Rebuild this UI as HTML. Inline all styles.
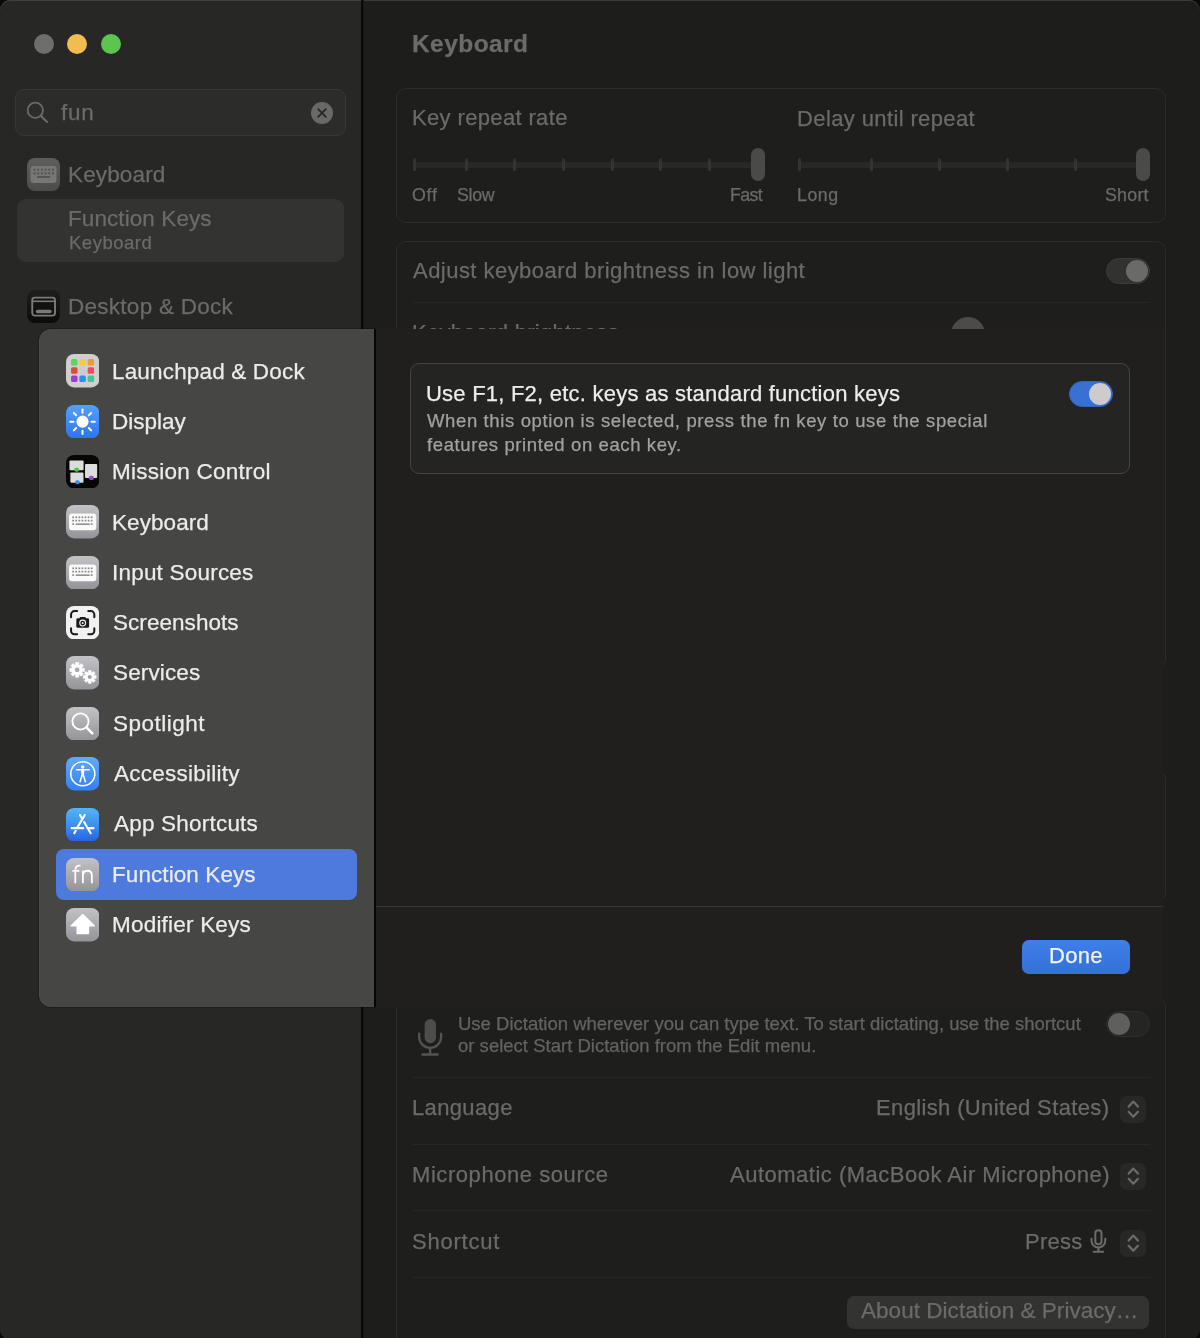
<!DOCTYPE html>
<html><head><meta charset="utf-8">
<style>
*{margin:0;padding:0;box-sizing:border-box}
html,body{width:1200px;height:1338px;overflow:hidden;background:#0a0a0a;font-family:"Liberation Sans",sans-serif}
.a{position:absolute}
.t{position:absolute;white-space:nowrap;line-height:1;-webkit-text-stroke:0.25px currentColor;will-change:transform}
svg{display:block}
</style></head><body>

<div class="a" style="left:0px;top:0px;width:1200px;height:1340px;background:#1d1d1b;border-radius:11px;box-shadow:inset 0 1px 0 #3c3c3b"></div>
<div class="a" style="left:0px;top:0px;width:362px;height:1340px;background:#272725;border-radius:11px 0 0 11px;box-shadow:inset 0 1px 0 #40403e"></div>
<div class="a" style="left:361px;top:0px;width:1.8px;height:1338px;background:#080808"></div>
<div class="a" style="left:362.8px;top:0px;width:1.2px;height:1338px;background:#1a1716"></div>
<div class="a" style="left:33.5px;top:33.5px;width:20px;height:20px;border-radius:50%;background:#6e6e6d"></div>
<div class="a" style="left:67px;top:33.5px;width:20px;height:20px;border-radius:50%;background:#f2bd50"></div>
<div class="a" style="left:100.7px;top:33.5px;width:20px;height:20px;border-radius:50%;background:#5dc452"></div>
<div class="a" style="left:15px;top:89px;width:331px;height:47px;border-radius:9px;background:#2c2c2b;border:1px solid #373736"></div>
<svg class="a" style="left:25px;top:100px" width="26" height="26" viewBox="0 0 26 26"><circle cx="10.3" cy="10.3" r="7.6" fill="none" stroke="#6b6b6a" stroke-width="1.8"/><line x1="15.8" y1="15.8" x2="22" y2="22" stroke="#6b6b6a" stroke-width="2" stroke-linecap="round"/></svg>
<div id="t0" class="t" style="left:61.11px;top:101.75px;font-size:22.5px;color:#6b6b6a;font-weight:normal;letter-spacing:0.750px;">fun</div>
<svg class="a" style="left:311px;top:101.5px" width="22" height="22" viewBox="0 0 22 22"><circle cx="11" cy="11" r="11" fill="#696968"/><path d="M7.2 7.2L14.8 14.8M14.8 7.2L7.2 14.8" stroke="#262625" stroke-width="1.8" stroke-linecap="round"/></svg>
<svg class="a" style="left:27px;top:158px" width="33" height="33" viewBox="0 0 33 33"><defs><linearGradient id="gk0" x1="0" y1="0" x2="0" y2="1"><stop offset="0" stop-color="#5e5e5d"/><stop offset="1" stop-color="#4c4c4b"/></linearGradient></defs><rect width="33" height="33" rx="8" fill="url(#gk0)"/><rect x="3.5" y="8" width="26" height="17" rx="3" fill="#777776"/><rect x="6.5" y="10.7" width="2" height="2" fill="#555554"/><rect x="10.2" y="10.7" width="2" height="2" fill="#555554"/><rect x="13.9" y="10.7" width="2" height="2" fill="#555554"/><rect x="17.6" y="10.7" width="2" height="2" fill="#555554"/><rect x="21.3" y="10.7" width="2" height="2" fill="#555554"/><rect x="25.0" y="10.7" width="2" height="2" fill="#555554"/><rect x="6.5" y="14.3" width="2" height="2" fill="#555554"/><rect x="10.2" y="14.3" width="2" height="2" fill="#555554"/><rect x="13.9" y="14.3" width="2" height="2" fill="#555554"/><rect x="17.6" y="14.3" width="2" height="2" fill="#555554"/><rect x="21.3" y="14.3" width="2" height="2" fill="#555554"/><rect x="25.0" y="14.3" width="2" height="2" fill="#555554"/><rect x="10" y="18" width="13" height="2" fill="#555554"/></svg>
<div id="t1" class="t" style="left:68.11px;top:163.75px;font-size:22.5px;color:#6b6b6a;font-weight:normal;letter-spacing:0.143px;">Keyboard</div>
<div class="a" style="left:17px;top:198.5px;width:327px;height:63px;border-radius:9px;background:#333332"></div>
<div id="t2" class="t" style="left:68.11px;top:207.95px;font-size:22.5px;color:#6b6b6a;font-weight:normal;letter-spacing:0.083px;">Function Keys</div>
<div id="t3" class="t" style="left:69.11px;top:233.84px;font-size:18.5px;color:#6b6b6a;font-weight:normal;letter-spacing:0.500px;">Keyboard</div>
<svg class="a" style="left:27px;top:290.4px" width="33" height="33" viewBox="0 0 33 33"><defs><linearGradient id="gdd" x1="0" y1="0" x2="0" y2="1"><stop offset="0" stop-color="#1f1f1e"/><stop offset="1" stop-color="#0b0b0a"/></linearGradient></defs><rect width="33" height="33" rx="8" fill="url(#gdd)"/><rect x="5.25" y="7.6" width="22.75" height="18" rx="2.5" fill="#121211" stroke="#7a7a79" stroke-width="1.9"/><line x1="5.3" y1="11.3" x2="28" y2="11.3" stroke="#7a7a79" stroke-width="1.6"/><rect x="8.8" y="19.7" width="15.9" height="3.6" rx="1.8" fill="#7a7a79"/></svg>
<div id="t4" class="t" style="left:67.80px;top:296.45px;font-size:22.5px;color:#6b6b6a;font-weight:normal;letter-spacing:0.269px;">Desktop &amp; Dock</div>
<div id="t5" class="t" style="left:411.91px;top:31.56px;font-size:24.5px;color:#6b6b6a;font-weight:bold;letter-spacing:0.429px;">Keyboard</div>
<div class="a" style="left:396px;top:87.5px;width:770px;height:135.5px;border-radius:10px;background:#1e1e1c;border:1px solid #2c2c2b"></div>
<div id="t6" class="t" style="left:411.91px;top:107.38px;font-size:22px;color:#6b6b6a;font-weight:normal;letter-spacing:0.357px;">Key repeat rate</div>
<div id="t7" class="t" style="left:796.91px;top:107.88px;font-size:22px;color:#6b6b6a;font-weight:normal;letter-spacing:0.382px;">Delay until repeat</div>
<div class="a" style="left:413px;top:161.5px;width:347px;height:6px;background:#282827;border-radius:3px"></div>
<div class="a" style="left:413.0px;top:158px;width:3px;height:13px;background:#333332;border-radius:1.5px"></div>
<div class="a" style="left:464.8px;top:158px;width:3px;height:13px;background:#333332;border-radius:1.5px"></div>
<div class="a" style="left:513.4px;top:158px;width:3px;height:13px;background:#333332;border-radius:1.5px"></div>
<div class="a" style="left:561.9px;top:158px;width:3px;height:13px;background:#333332;border-radius:1.5px"></div>
<div class="a" style="left:610.5px;top:158px;width:3px;height:13px;background:#333332;border-radius:1.5px"></div>
<div class="a" style="left:659.1px;top:158px;width:3px;height:13px;background:#333332;border-radius:1.5px"></div>
<div class="a" style="left:707.6px;top:158px;width:3px;height:13px;background:#333332;border-radius:1.5px"></div>
<div class="a" style="left:751px;top:148px;width:13.5px;height:33px;background:#4a4a49;border-radius:7px"></div>
<div id="t8" class="t" style="left:412.00px;top:186.53px;font-size:17.8px;color:#6b6b6a;font-weight:normal;letter-spacing:0.750px;">Off</div>
<div id="t9" class="t" style="left:457.11px;top:186.53px;font-size:17.8px;color:#6b6b6a;font-weight:normal;letter-spacing:-0.333px;">Slow</div>
<div id="t10" class="t" style="left:730.11px;top:186.53px;font-size:17.8px;color:#6b6b6a;font-weight:normal;letter-spacing:-0.667px;">Fast</div>
<div class="a" style="left:798px;top:161.5px;width:350px;height:6px;background:#282827;border-radius:3px"></div>
<div class="a" style="left:797.8px;top:158px;width:3px;height:13px;background:#333332;border-radius:1.5px"></div>
<div class="a" style="left:870.2px;top:158px;width:3px;height:13px;background:#333332;border-radius:1.5px"></div>
<div class="a" style="left:938.0px;top:158px;width:3px;height:13px;background:#333332;border-radius:1.5px"></div>
<div class="a" style="left:1005.7px;top:158px;width:3px;height:13px;background:#333332;border-radius:1.5px"></div>
<div class="a" style="left:1073.5px;top:158px;width:3px;height:13px;background:#333332;border-radius:1.5px"></div>
<div class="a" style="left:1136px;top:148px;width:13.5px;height:33px;background:#4a4a49;border-radius:7px"></div>
<div id="t11" class="t" style="left:797.00px;top:186.53px;font-size:17.8px;color:#6b6b6a;font-weight:normal;letter-spacing:0.500px;">Long</div>
<div id="t12" class="t" style="left:1105.11px;top:186.53px;font-size:17.8px;color:#6b6b6a;font-weight:normal;letter-spacing:0.250px;">Short</div>
<div class="a" style="left:396px;top:240.5px;width:770px;height:428px;border-radius:10px;background:#1e1e1c;border:1px solid #2c2c2b"></div>
<div id="t13" class="t" style="left:412.91px;top:260.18px;font-size:22px;color:#6b6b6a;font-weight:normal;letter-spacing:0.461px;">Adjust keyboard brightness in low light</div>
<div class="a" style="left:1106px;top:258px;width:43.5px;height:26px;border-radius:13px;background:#323231;border:1px solid #3a3a39"></div>
<div class="a" style="left:1126px;top:259.5px;width:22px;height:22px;border-radius:50%;background:#6a6a69"></div>
<div class="a" style="left:413px;top:301.5px;width:737px;height:1px;background:#262625"></div>
<div id="t14" class="t" style="left:411.90px;top:321.68px;font-size:22px;color:#6b6b6a;font-weight:normal;letter-spacing:0.269px;">Keyboard brightness</div>
<div class="a" style="left:950.5px;top:317px;width:34px;height:34px;border-radius:50%;background:#4b4b4a"></div>
<div class="a" style="left:396px;top:770px;width:770px;height:132px;border-radius:10px;background:#1e1e1c;border:1px solid #2c2c2b"></div>
<div class="a" style="left:396px;top:997px;width:770px;height:420px;border-radius:10px;background:#1e1e1c;border:1px solid #2c2c2b"></div>
<!--SHEET-->
<svg class="a" style="left:417px;top:1019px" width="27" height="38" viewBox="0 0 27 38"><rect x="7.6" y="0.1" width="11.4" height="24.1" rx="5.7" fill="#4d4d4c"/><path d="M2.15 14.6V17.85A11 11 0 0 0 24.15 17.85V14.6" fill="none" stroke="#545453" stroke-width="2.3" stroke-linecap="round"/><line x1="13.15" y1="28.8" x2="13.15" y2="35.5" stroke="#545453" stroke-width="2.3"/><line x1="5.6" y1="35.6" x2="20.6" y2="35.6" stroke="#545453" stroke-width="2.5" stroke-linecap="round"/></svg>
<div id="t15" class="t" style="left:457.91px;top:1015.34px;font-size:18.5px;color:#636362;font-weight:normal;letter-spacing:0.000px;">Use Dictation wherever you can type text. To start dictating, use the shortcut</div>
<div id="t16" class="t" style="left:457.91px;top:1036.64px;font-size:18.5px;color:#636362;font-weight:normal;letter-spacing:0.011px;">or select Start Dictation from the Edit menu.</div>
<div class="a" style="left:1106px;top:1010.5px;width:44px;height:26px;border-radius:13px;background:#252524;border:1px solid #2e2e2d"></div>
<div class="a" style="left:1107.5px;top:1012.5px;width:22px;height:22px;border-radius:50%;background:#5f5f5e"></div>
<div class="a" style="left:413px;top:1076.5px;width:737px;height:1px;background:#272726"></div>
<div id="t17" class="t" style="left:411.91px;top:1097.38px;font-size:22px;color:#6b6b6a;font-weight:normal;letter-spacing:0.357px;">Language</div>
<div id="t18" class="t" style="left:875.50px;top:1097.38px;font-size:22px;color:#6b6b6a;font-weight:normal;letter-spacing:0.364px;">English (United States)</div>
<div class="a" style="left:1120.0px;top:1095.5px;width:25.5px;height:27px;border-radius:6.5px;background:#282827"></div>
<svg class="a" style="left:1119.5px;top:1095.5px" width="26.5" height="26.5" viewBox="0 0 26.5 26.5"><path d="M8.7 10.6L13.3 5.6L17.9 10.6M8.7 15.8L13.3 20.8L17.9 15.8" fill="none" stroke="#6b6b6a" stroke-width="2.2" stroke-linecap="round" stroke-linejoin="round"/></svg>
<div class="a" style="left:413px;top:1143.5px;width:737px;height:1px;background:#272726"></div>
<div id="t19" class="t" style="left:411.91px;top:1164.08px;font-size:22px;color:#6b6b6a;font-weight:normal;letter-spacing:0.562px;">Microphone source</div>
<div id="t20" class="t" style="left:729.61px;top:1164.08px;font-size:22px;color:#6b6b6a;font-weight:normal;letter-spacing:0.500px;">Automatic (MacBook Air Microphone)</div>
<div class="a" style="left:1120.0px;top:1162.5px;width:25.5px;height:27px;border-radius:6.5px;background:#282827"></div>
<svg class="a" style="left:1119.5px;top:1162.5px" width="26.5" height="26.5" viewBox="0 0 26.5 26.5"><path d="M8.7 10.6L13.3 5.6L17.9 10.6M8.7 15.8L13.3 20.8L17.9 15.8" fill="none" stroke="#6b6b6a" stroke-width="2.2" stroke-linecap="round" stroke-linejoin="round"/></svg>
<div class="a" style="left:413px;top:1210px;width:737px;height:1px;background:#272726"></div>
<div id="t21" class="t" style="left:411.91px;top:1230.68px;font-size:22px;color:#6b6b6a;font-weight:normal;letter-spacing:0.786px;">Shortcut</div>
<div id="t22" class="t" style="left:1024.50px;top:1230.68px;font-size:22px;color:#6b6b6a;font-weight:normal;letter-spacing:0.250px;">Press</div>
<svg class="a" style="left:1089px;top:1229px" width="19" height="25" viewBox="0 0 19 25"><rect x="6.3" y="1.3" width="6.2" height="14" rx="3.1" fill="none" stroke="#6b6b6a" stroke-width="2"/><path d="M2.5 9.7V11.6A6.9 6.9 0 0 0 16.3 11.6V9.7" fill="none" stroke="#6b6b6a" stroke-width="2" stroke-linecap="round"/><line x1="9.4" y1="18.5" x2="9.4" y2="22.7" stroke="#6b6b6a" stroke-width="2"/><line x1="4.6" y1="22.75" x2="14.2" y2="22.75" stroke="#6b6b6a" stroke-width="2" stroke-linecap="round"/></svg>
<div class="a" style="left:1120.0px;top:1229.8px;width:25.5px;height:27px;border-radius:6.5px;background:#282827"></div>
<svg class="a" style="left:1119.5px;top:1229.8px" width="26.5" height="26.5" viewBox="0 0 26.5 26.5"><path d="M8.7 10.6L13.3 5.6L17.9 10.6M8.7 15.8L13.3 20.8L17.9 15.8" fill="none" stroke="#6b6b6a" stroke-width="2.2" stroke-linecap="round" stroke-linejoin="round"/></svg>
<div class="a" style="left:413px;top:1277px;width:737px;height:1px;background:#272726"></div>
<div class="a" style="left:847px;top:1295.5px;width:302px;height:33px;border-radius:7px;background:#333332"></div>
<div id="t23" class="t" style="left:861.00px;top:1299.65px;font-size:22.5px;color:#6b6b6a;font-weight:normal;letter-spacing:0.040px;">About Dictation &amp; Privacy…</div>
<div class="a" style="left:39px;top:329px;width:336px;height:678px;background:#464645;border-radius:12px 0 0 12px;box-shadow:0 0 0 1px rgba(0,0,0,0.22), inset 1px 0 0 rgba(255,255,255,0.04)"></div>
<div class="a" style="left:374px;top:329px;width:2px;height:678px;background:#050505"></div>
<div class="a" style="left:376px;top:329px;width:787px;height:678px;background:#201f1e"></div>
<div class="a" style="left:55.7px;top:849.3px;width:301.3px;height:50.3px;border-radius:8px;background:#4e7ade"></div>
<div id="t24" class="t" style="left:111.51px;top:360.75px;font-size:22.5px;color:#ececec;font-weight:normal;letter-spacing:0.167px;">Launchpad &amp; Dock</div>
<div id="t25" class="t" style="left:111.51px;top:411.04px;font-size:22.5px;color:#ececec;font-weight:normal;letter-spacing:0.000px;">Display</div>
<div id="t26" class="t" style="left:111.51px;top:461.33px;font-size:22.5px;color:#ececec;font-weight:normal;letter-spacing:0.250px;">Mission Control</div>
<div id="t27" class="t" style="left:111.51px;top:511.62px;font-size:22.5px;color:#ececec;font-weight:normal;letter-spacing:0.071px;">Keyboard</div>
<div id="t28" class="t" style="left:111.51px;top:561.91px;font-size:22.5px;color:#ececec;font-weight:normal;letter-spacing:0.208px;">Input Sources</div>
<div id="t29" class="t" style="left:112.51px;top:612.20px;font-size:22.5px;color:#ececec;font-weight:normal;letter-spacing:0.050px;">Screenshots</div>
<div id="t30" class="t" style="left:112.51px;top:662.49px;font-size:22.5px;color:#ececec;font-weight:normal;letter-spacing:0.143px;">Services</div>
<div id="t31" class="t" style="left:112.51px;top:712.78px;font-size:22.5px;color:#ececec;font-weight:normal;letter-spacing:0.500px;">Spotlight</div>
<div id="t32" class="t" style="left:113.51px;top:763.07px;font-size:22.5px;color:#ececec;font-weight:normal;letter-spacing:0.250px;">Accessibility</div>
<div id="t33" class="t" style="left:113.51px;top:813.36px;font-size:22.5px;color:#ececec;font-weight:normal;letter-spacing:0.208px;">App Shortcuts</div>
<div id="t34" class="t" style="left:111.51px;top:863.65px;font-size:22.5px;color:#ececec;font-weight:normal;letter-spacing:0.083px;">Function Keys</div>
<div id="t35" class="t" style="left:111.51px;top:913.94px;font-size:22.5px;color:#ececec;font-weight:normal;letter-spacing:0.208px;">Modifier Keys</div>
<svg class="a" style="left:65.6px;top:354.30px" width="33.4" height="33.4" viewBox="0 0 33 33"><rect x="0" y="0" width="33" height="33" rx="8" fill="#cfcfcf"/><rect x="5.0" y="5.0" width="6.4" height="6.4" rx="1.5" fill="#5fd35a"/><rect x="13.2" y="5.0" width="6.4" height="6.4" rx="1.5" fill="#f9c940"/><rect x="21.4" y="5.0" width="6.4" height="6.4" rx="1.5" fill="#f19a32"/><rect x="5.0" y="13.1" width="6.4" height="6.4" rx="1.5" fill="#e3463a"/><rect x="13.2" y="13.1" width="6.4" height="6.4" rx="1.5" fill="#c7ccd0"/><rect x="21.4" y="13.1" width="6.4" height="6.4" rx="1.5" fill="#ee4a5f"/><rect x="5.0" y="21.2" width="6.4" height="6.4" rx="1.5" fill="#9b3fd0"/><rect x="13.2" y="21.2" width="6.4" height="6.4" rx="1.5" fill="#2a8ff0"/><rect x="21.4" y="21.2" width="6.4" height="6.4" rx="1.5" fill="#45c49a"/></svg>
<svg class="a" style="left:65.6px;top:404.66px" width="33.4" height="33.4" viewBox="0 0 33 33"><defs><linearGradient id="gb1" x1="0" y1="0" x2="0" y2="1"><stop offset="0" stop-color="#54a0fa"/><stop offset="1" stop-color="#2f74ee"/></linearGradient></defs><rect x="0" y="0" width="33" height="33" rx="8" fill="url(#gb1)"/><circle cx="16.3" cy="16.5" r="6" fill="#fff"/><line x1="25.20" y1="16.50" x2="28.40" y2="16.50" stroke="#fff" stroke-width="2" stroke-linecap="round"/><line x1="22.59" y1="22.79" x2="24.86" y2="25.06" stroke="#fff" stroke-width="2" stroke-linecap="round"/><line x1="16.30" y1="25.40" x2="16.30" y2="28.60" stroke="#fff" stroke-width="2" stroke-linecap="round"/><line x1="10.01" y1="22.79" x2="7.74" y2="25.06" stroke="#fff" stroke-width="2" stroke-linecap="round"/><line x1="7.40" y1="16.50" x2="4.20" y2="16.50" stroke="#fff" stroke-width="2" stroke-linecap="round"/><line x1="10.01" y1="10.21" x2="7.74" y2="7.94" stroke="#fff" stroke-width="2" stroke-linecap="round"/><line x1="16.30" y1="7.60" x2="16.30" y2="4.40" stroke="#fff" stroke-width="2" stroke-linecap="round"/><line x1="22.59" y1="10.21" x2="24.86" y2="7.94" stroke="#fff" stroke-width="2" stroke-linecap="round"/></svg>
<svg class="a" style="left:65.6px;top:455.02px" width="33.4" height="33.4" viewBox="0 0 33 33"><rect x="0" y="0" width="33" height="33" rx="8" fill="#060606"/><rect x="3.4" y="5.5" width="14" height="9.5" rx="1" fill="#dcdcdc"/><rect x="4.3" y="17.2" width="13" height="10.2" rx="1" fill="#dcdcdc"/><rect x="18.8" y="9" width="12" height="13.8" rx="1" fill="#dcdcdc"/><rect x="8" y="12.5" width="5" height="4" rx="1.8" fill="#48c84a"/><rect x="9" y="25" width="4.6" height="3.8" rx="1.8" fill="#2b97f0"/><rect x="22.5" y="20.5" width="5" height="4.2" rx="1.8" fill="#a046d8"/></svg>
<svg class="a" style="left:65.6px;top:505.38px" width="33.4" height="33.4" viewBox="0 0 33 33"><defs><linearGradient id="gg3" x1="0" y1="0" x2="0" y2="1"><stop offset="0" stop-color="#c3c3c7"/><stop offset="1" stop-color="#949498"/></linearGradient></defs><rect x="0" y="0" width="33" height="33" rx="8" fill="url(#gg3)"/><rect x="3" y="8.5" width="27" height="16.5" rx="3" fill="#fafafa"/><rect x="6.20" y="11.30" width="1.7" height="1.7" fill="#8a8a8c"/><rect x="9.25" y="11.30" width="1.7" height="1.7" fill="#8a8a8c"/><rect x="12.30" y="11.30" width="1.7" height="1.7" fill="#8a8a8c"/><rect x="15.35" y="11.30" width="1.7" height="1.7" fill="#8a8a8c"/><rect x="18.40" y="11.30" width="1.7" height="1.7" fill="#8a8a8c"/><rect x="21.45" y="11.30" width="1.7" height="1.7" fill="#8a8a8c"/><rect x="24.50" y="11.30" width="1.7" height="1.7" fill="#8a8a8c"/><rect x="6.20" y="14.60" width="1.7" height="1.7" fill="#8a8a8c"/><rect x="9.25" y="14.60" width="1.7" height="1.7" fill="#8a8a8c"/><rect x="12.30" y="14.60" width="1.7" height="1.7" fill="#8a8a8c"/><rect x="15.35" y="14.60" width="1.7" height="1.7" fill="#8a8a8c"/><rect x="18.40" y="14.60" width="1.7" height="1.7" fill="#8a8a8c"/><rect x="21.45" y="14.60" width="1.7" height="1.7" fill="#8a8a8c"/><rect x="24.50" y="14.60" width="1.7" height="1.7" fill="#8a8a8c"/><rect x="6.2" y="18" width="1.7" height="1.7" fill="#8a8a8c"/><rect x="9.6" y="18.2" width="13.8" height="1.5" fill="#8a8a8c"/><rect x="24.5" y="18" width="1.7" height="1.7" fill="#8a8a8c"/></svg>
<svg class="a" style="left:65.6px;top:555.74px" width="33.4" height="33.4" viewBox="0 0 33 33"><defs><linearGradient id="gg4" x1="0" y1="0" x2="0" y2="1"><stop offset="0" stop-color="#c3c3c7"/><stop offset="1" stop-color="#949498"/></linearGradient></defs><rect x="0" y="0" width="33" height="33" rx="8" fill="url(#gg4)"/><rect x="3" y="8.5" width="27" height="16.5" rx="3" fill="#fafafa"/><rect x="6.20" y="11.30" width="1.7" height="1.7" fill="#8a8a8c"/><rect x="9.25" y="11.30" width="1.7" height="1.7" fill="#8a8a8c"/><rect x="12.30" y="11.30" width="1.7" height="1.7" fill="#8a8a8c"/><rect x="15.35" y="11.30" width="1.7" height="1.7" fill="#8a8a8c"/><rect x="18.40" y="11.30" width="1.7" height="1.7" fill="#8a8a8c"/><rect x="21.45" y="11.30" width="1.7" height="1.7" fill="#8a8a8c"/><rect x="24.50" y="11.30" width="1.7" height="1.7" fill="#8a8a8c"/><rect x="6.20" y="14.60" width="1.7" height="1.7" fill="#8a8a8c"/><rect x="9.25" y="14.60" width="1.7" height="1.7" fill="#8a8a8c"/><rect x="12.30" y="14.60" width="1.7" height="1.7" fill="#8a8a8c"/><rect x="15.35" y="14.60" width="1.7" height="1.7" fill="#8a8a8c"/><rect x="18.40" y="14.60" width="1.7" height="1.7" fill="#8a8a8c"/><rect x="21.45" y="14.60" width="1.7" height="1.7" fill="#8a8a8c"/><rect x="24.50" y="14.60" width="1.7" height="1.7" fill="#8a8a8c"/><rect x="6.2" y="18" width="1.7" height="1.7" fill="#8a8a8c"/><rect x="9.6" y="18.2" width="13.8" height="1.5" fill="#8a8a8c"/><rect x="24.5" y="18" width="1.7" height="1.7" fill="#8a8a8c"/></svg>
<svg class="a" style="left:65.6px;top:606.10px" width="33.4" height="33.4" viewBox="0 0 33 33"><rect x="0" y="0" width="33" height="33" rx="8" fill="#f1f1f1"/><path d="M5 11V8.5A3.5 3.5 0 0 1 8.5 5H11M22 5h2.5A3.5 3.5 0 0 1 28 8.5V11M28 22v2.5A3.5 3.5 0 0 1 24.5 28H22M11 28H8.5A3.5 3.5 0 0 1 5 24.5V22" fill="none" stroke="#1a1a1a" stroke-width="2" stroke-linecap="round"/><rect x="10.2" y="12.2" width="12.6" height="9.4" rx="1.3" fill="#1a1a1a"/><rect x="13.5" y="10.8" width="6" height="2.5" rx="0.8" fill="#1a1a1a"/><circle cx="16.5" cy="16.9" r="2.9" fill="none" stroke="#f1f1f1" stroke-width="1.1"/><circle cx="16.5" cy="16.9" r="1" fill="#f1f1f1"/></svg>
<svg class="a" style="left:65.6px;top:656.46px" width="33.4" height="33.4" viewBox="0 0 33 33"><defs><linearGradient id="gg6" x1="0" y1="0" x2="0" y2="1"><stop offset="0" stop-color="#c3c3c7"/><stop offset="1" stop-color="#949498"/></linearGradient></defs><rect x="0" y="0" width="33" height="33" rx="8" fill="url(#gg6)"/><polygon points="15.98,12.19 18.23,12.11 18.23,15.29 15.98,15.21 15.59,16.15 17.23,17.69 14.99,19.93 13.45,18.29 12.51,18.68 12.59,20.93 9.41,20.93 9.49,18.68 8.55,18.29 7.01,19.93 4.77,17.69 6.41,16.15 6.02,15.21 3.77,15.29 3.77,12.11 6.02,12.19 6.41,11.25 4.77,9.71 7.01,7.47 8.55,9.11 9.49,8.72 9.41,6.47 12.59,6.47 12.51,8.72 13.45,9.11 14.99,7.47 17.23,9.71 15.59,11.25" fill="#fff" stroke="#fff" stroke-width="0.6" stroke-linejoin="round"/><circle cx="11" cy="13.7" r="2.4" fill="#a9a9ac"/><polygon points="27.90,19.36 29.85,19.31 29.85,22.09 27.90,22.04 27.56,22.87 28.97,24.20 27.00,26.17 25.67,24.76 24.84,25.10 24.89,27.05 22.11,27.05 22.16,25.10 21.33,24.76 20.00,26.17 18.03,24.20 19.44,22.87 19.10,22.04 17.15,22.09 17.15,19.31 19.10,19.36 19.44,18.53 18.03,17.20 20.00,15.23 21.33,16.64 22.16,16.30 22.11,14.35 24.89,14.35 24.84,16.30 25.67,16.64 27.00,15.23 28.97,17.20 27.56,18.53" fill="#fff" stroke="#fff" stroke-width="0.6" stroke-linejoin="round"/><circle cx="23.5" cy="20.7" r="2.0" fill="#a2a2a5"/></svg>
<svg class="a" style="left:65.6px;top:706.82px" width="33.4" height="33.4" viewBox="0 0 33 33"><defs><linearGradient id="gg7" x1="0" y1="0" x2="0" y2="1"><stop offset="0" stop-color="#c3c3c7"/><stop offset="1" stop-color="#949498"/></linearGradient></defs><rect x="0" y="0" width="33" height="33" rx="8" fill="url(#gg7)"/><circle cx="14.3" cy="14.3" r="8" fill="none" stroke="#fff" stroke-width="1.8"/><line x1="20.2" y1="20.2" x2="26" y2="26" stroke="#fff" stroke-width="2.6" stroke-linecap="round"/></svg>
<svg class="a" style="left:65.6px;top:757.18px" width="33.4" height="33.4" viewBox="0 0 33 33"><defs><linearGradient id="gacc" x1="0" y1="0" x2="0" y2="1"><stop offset="0" stop-color="#63a9f9"/><stop offset="1" stop-color="#3580f1"/></linearGradient></defs><rect x="0" y="0" width="33" height="33" rx="8" fill="url(#gacc)"/><circle cx="16.6" cy="16.6" r="11.9" fill="none" stroke="#fff" stroke-width="1.5"/><circle cx="16.5" cy="9.8" r="1.75" fill="#fff"/><path d="M10.4 12.6L23 12.6" stroke="#fff" stroke-width="1.5" stroke-linecap="round"/><path d="M14.8 12.4H18.2L17.7 19.2H15.3Z" fill="#fff"/><path d="M15.6 18.5L13.9 24.4M17.4 18.5L19.1 24.4" stroke="#fff" stroke-width="1.5" stroke-linecap="round"/></svg>
<svg class="a" style="left:65.6px;top:807.54px" width="33.4" height="33.4" viewBox="0 0 33 33"><defs><linearGradient id="gas" x1="0" y1="0" x2="0" y2="1"><stop offset="0" stop-color="#55b4f6"/><stop offset="0.55" stop-color="#3a8cee"/><stop offset="1" stop-color="#2a62df"/></linearGradient></defs><rect x="0" y="0" width="33" height="33" rx="8" fill="url(#gas)"/><path d="M5.6 19.9H17M21.3 19.9H27.2" stroke="#fff" stroke-width="2.1" stroke-linecap="round"/><path d="M13.8 6.9L15.4 9.6M17.9 13.9L24.4 24.9" stroke="#fff" stroke-width="2.1" stroke-linecap="round"/><path d="M18.6 6.9L11 19.6M9.6 22.5L8.2 24.8" stroke="#fff" stroke-width="2.1" stroke-linecap="round"/></svg>
<svg class="a" style="left:65.6px;top:857.90px" width="33.4" height="33.4" viewBox="0 0 33 33"><defs><linearGradient id="gg10" x1="0" y1="0" x2="0" y2="1"><stop offset="0" stop-color="#c3c3c7"/><stop offset="1" stop-color="#949498"/></linearGradient></defs><rect x="0" y="0" width="33" height="33" rx="8" fill="url(#gg10)"/><path d="M9.2 24.9V12.1C9.2 9.1 10.5 7.6 13 7.6H14.3M6.3 12.8H13.2M16.7 12.4V24.9M16.7 16.8C17.3 13.9 19 12.6 21.2 12.6C24.1 12.6 25.6 14.3 25.6 17.4V24.9" fill="none" stroke="#fff" stroke-width="1.75"/></svg>
<svg class="a" style="left:65.6px;top:908.26px" width="33.4" height="33.4" viewBox="0 0 33 33"><defs><linearGradient id="gg11" x1="0" y1="0" x2="0" y2="1"><stop offset="0" stop-color="#c3c3c7"/><stop offset="1" stop-color="#949498"/></linearGradient></defs><rect x="0" y="0" width="33" height="33" rx="8" fill="url(#gg11)"/><path d="M16.5 6.3L27.9 17.6H22.2V25.2H11V17.6H5.2Z" fill="#fff" stroke="#fff" stroke-width="1.3" stroke-linejoin="round"/></svg>
<div class="a" style="left:409.5px;top:362.5px;width:720.5px;height:111px;border-radius:9px;background:#242423;border:1.5px solid #444443"></div>
<div id="t36" class="t" style="left:426.00px;top:382.68px;font-size:22px;color:#ededed;font-weight:normal;letter-spacing:0.228px;">Use F1, F2, etc. keys as standard function keys</div>
<div id="t37" class="t" style="left:427.00px;top:412.34px;font-size:18.5px;color:#a2a2a1;font-weight:normal;letter-spacing:0.625px;">When this option is selected, press the fn key to use the special</div>
<div id="t38" class="t" style="left:427.00px;top:435.64px;font-size:18.5px;color:#a2a2a1;font-weight:normal;letter-spacing:0.607px;">features printed on each key.</div>
<div class="a" style="left:1069.3px;top:381.3px;width:43.5px;height:25.5px;border-radius:13px;background:#3970d4;border:1px solid #3364c0"></div>
<div class="a" style="left:1089px;top:383px;width:22.3px;height:22.3px;border-radius:50%;background:#cccccc"></div>
<div class="a" style="left:376px;top:905.5px;width:787px;height:1.5px;background:#363635"></div>
<div class="a" style="left:1022px;top:940px;width:107.6px;height:34px;border-radius:7px;background:linear-gradient(#3e7fe8,#3570d8)"></div>
<div id="t39" class="t" style="left:1049.00px;top:945.08px;font-size:22px;color:#f4f4f4;font-weight:normal;letter-spacing:0.333px;">Done</div>
</body></html>
